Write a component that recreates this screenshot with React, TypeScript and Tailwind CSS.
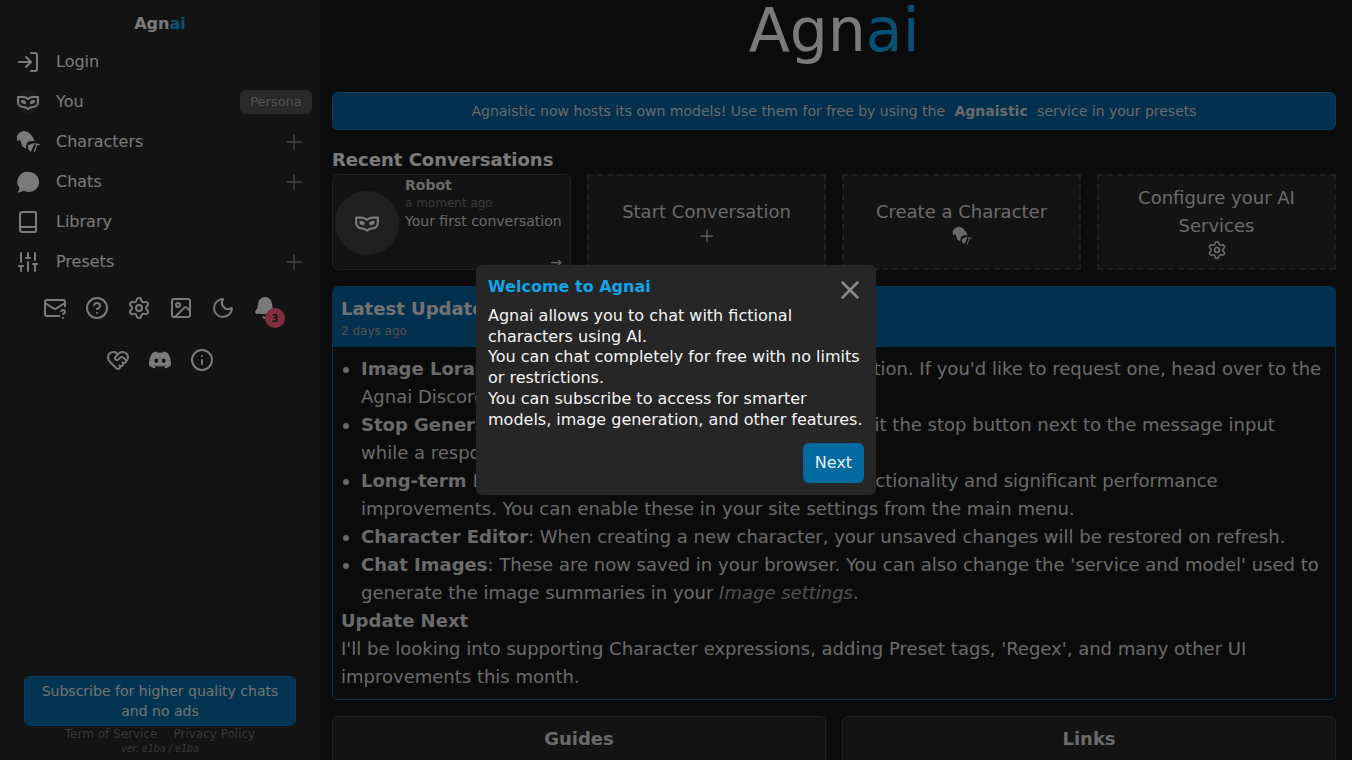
import { Bell, Book, CircleHelp, HeartHandshake, Image, Info, LogIn, MailQuestion, Moon, Plus, Settings, SlidersHorizontal, X } from "lucide-react";
import { FaDiscord } from "react-icons/fa";
import type { ReactNode } from "react";

// silhouette used for the Characters menu entry
const WizardIcon = ({ size = 24 }: { size?: number }) => (
  <svg width={size} height={size} viewBox="0 0 24 24" fill="currentColor">
    <path d="M.7 6.300 3 3 8 .7l5 2 3.300 3.600 2.400 4.400-5.700.6-2.300 2.200-1 5.200-3.400-2.400L4 9.700l-2.700 1.600z" />
    <path d="M12 15.300l7-2.600L14.700 22 12 18.700z" />
    <path d="M18.200 22 21 14M19 13.800l4.700.9" fill="none" stroke="currentColor" strokeWidth="1.200" />
  </svg>
);

const ChatIcon = () => (
  <svg width="24" height="24" viewBox="0 0 24 24" fill="currentColor">
    <path d="M13 2a10 10 0 1 1-5.200 18.500C6 22 3.500 22.600 1.200 22.400c1.400-1.300 2-2.600 2.300-4.400A10 10 0 0 1 13 2z" />
  </svg>
);

const MaskIcon = ({ size = 24 }: { size?: number }) => (
  <svg width={size} height={size} viewBox="0 0 24 24" fill="none" stroke="currentColor" strokeWidth="2" strokeLinecap="round" strokeLinejoin="round">
    <path d="M2 12a5 5 0 0 0 5 5 8 8 0 0 1 5 2 8 8 0 0 1 5-2 5 5 0 0 0 5-5V7h-5a8 8 0 0 0-5 2 8 8 0 0 0-5-2H2Z" />
    <path d="M6 11c1.500 0 3 .5 3 2-2 0-3 0-3-2Z" />
    <path d="M18 11c-1.500 0-3 .5-3 2 2 0 3 0 3-2Z" />
  </svg>
);

const NavRow = ({ icon, label, right }: { icon: ReactNode; label: string; right?: ReactNode }) => (
  <div className="flex h-10 items-center justify-between pr-2 pl-4">
    <div className="flex items-center gap-4">
      <span className="flex w-6 justify-center">{icon}</span>
      <span>{label}</span>
    </div>
    {right}
  </div>
);

const AddButton = () => (
  <span className="flex w-[36px] justify-center text-[#8a8a8a]">
    <Plus size={24} strokeWidth={1.5} />
  </span>
);

const Sidebar = () => (
  <aside className="flex h-full w-[320px] shrink-0 flex-col bg-[#262626] text-[#f5f5f5]">
    <div className="flex h-[42px] shrink-0 items-center justify-center pt-[6px] text-[16px] font-bold">
      <span className="text-[#f5f5f5]">Agn</span>
      <span className="text-[#0ea5e9]">ai</span>
    </div>
    <NavRow icon={<LogIn size={24} />} label="Login" />
    <NavRow
      icon={
        <span className="flex h-6 w-6 items-center justify-center rounded-full bg-[#333333]">
          <MaskIcon size={24} />
        </span>
      }
      label="You"
      right={<span className="flex h-6 w-[72px] items-center justify-center rounded-md bg-[#525252] text-[13px] text-[#a3a3a3]">Persona</span>}
    />
    <NavRow icon={<WizardIcon />} label="Characters" right={<AddButton />} />
    <NavRow icon={<ChatIcon />} label="Chats" right={<AddButton />} />
    <NavRow icon={<Book size={24} />} label="Library" />
    <NavRow icon={<SlidersHorizontal size={24} className="rotate-90" />} label="Presets" right={<AddButton />} />
    <div className="flex h-[52px] items-center justify-center gap-[18px]">
      <MailQuestion size={24} />
      <CircleHelp size={24} />
      <Settings size={24} />
      <Image size={24} />
      <Moon size={24} />
      <span className="relative">
        <Bell size={24} fill="currentColor" />
        <span className="absolute top-[12px] left-[12px] flex h-5 w-5 items-center justify-center rounded-full bg-[#ff5c80] text-[10px] font-bold text-[#262626]">3</span>
      </span>
    </div>
    <div className="flex h-[52px] items-center justify-center gap-[18px]">
      <HeartHandshake size={24} />
      <FaDiscord size={24} />
      <Info size={24} />
    </div>
    <div className="mt-auto flex flex-col items-center pb-[4px]">
      <div className="w-[272px] rounded-md border border-[#0a7ec0] bg-[#0369a1] px-2 py-[4px] text-center text-[14px] leading-[20px] text-[#e5e5e5]">
        Subscribe for higher quality chats and no ads
      </div>
      <div className="flex gap-4 text-[12px] leading-[16px] text-[#737373]">
        <span>Term of Service</span>
        <span>Privacy Policy</span>
      </div>
      <div className="text-[9.6px] leading-[14px] text-[#737373] italic">ver. e1ba / e1ba</div>
    </div>
  </aside>
);

const DashedCard = ({ children }: { children: ReactNode }) => (
  <div className="flex flex-col items-center justify-center border-2 border-dashed border-[#404040] bg-[#262626] text-center text-[18px] leading-[28px] text-[#d4d4d4]">
    {children}
  </div>
);

const Main = () => (
  <main className="flex min-w-0 flex-1 flex-col overflow-hidden bg-[#171717] pr-4 pl-3 text-[#f5f5f5]">
    <div className="flex h-[60px] shrink-0 items-center justify-center text-[60px] leading-[60px]">
      <span className="text-[#f5f5f5]">Agn</span>
      <span className="text-[#0ea5e9]">ai</span>
    </div>
    <div className="mt-[32px] flex h-[38px] shrink-0 items-center justify-center rounded-md border border-[#0a7ec0] bg-[#07609a] text-[14px] text-[#d4d4d4]">
      <span className="whitespace-pre">Agnaistic now hosts its own models! Use them for free by using the </span>
      <b className="mx-[5px]">Agnaistic</b>
      <span className="whitespace-pre"> service in your presets</span>
    </div>
    <h2 className="mt-[18px] text-[18px] leading-[24px] font-bold text-[#f5f5f5]">Recent Conversations</h2>
    <div className="mt-[2px] grid h-[96px] shrink-0 grid-cols-4 gap-4">
      <div className="flex rounded-md border border-[#404040] bg-[#262626]">
        <div className="mt-[16px] ml-[2px] flex h-16 w-16 shrink-0 items-center justify-center self-start rounded-full bg-[#404040]">
          <MaskIcon size={26} />
        </div>
        <div className="relative flex-1 pl-[6px] text-[14px]">
          <div className="text-[14px] leading-[20px] font-bold text-[#d4d4d4]">Robot</div>
          <div className="text-[12px] leading-[16px] text-[#737373]">a moment ago</div>
          <div className="leading-[20px] text-[#d4d4d4]">Your first conversation</div>
          <span className="absolute right-[8px] bottom-[-4px] text-[14px] text-[#d4d4d4]">→</span>
        </div>
      </div>
      <DashedCard>
        <span>Start Conversation</span>
        <Plus size={20} strokeWidth={1.5} />
      </DashedCard>
      <DashedCard>
        <span>Create a Character</span>
        <WizardIcon size={20} />
      </DashedCard>
      <DashedCard>
        <span>Configure your AI Services</span>
        <Settings size={20} />
      </DashedCard>
    </div>
    <section className="mt-4 shrink-0 overflow-hidden rounded-md border border-[#0369a1]">
      <header className="flex h-[60px] flex-col justify-center bg-[#07609a] px-2">
        <div className="text-[18px] leading-[28px] font-bold text-[#e5e5e5]">Latest Updates</div>
        <div className="text-[12px] leading-[16px] text-[#a3a3a3]">2 days ago</div>
      </header>
      <div className="px-2 py-[8px] text-[18px] leading-[28px] text-[#d4d4d4]">
        <ul className="list-disc pl-[20px]">
          <li>
            <b>Image Loras</b>: Loras <span className="ml-[1.5px]">are</span> now available for image generation. If you'd like to request one, head over to the Agnai Discord.
          </li>
          <li>
            <b>Stop Generation</b>: You <span className="-ml-[3px]">can</span> stop messages generating. Hit the stop button next to the message input while a response is being generated.
          </li>
          <li>
            <b>Long-term Memory</b>: Embeddings <span className="-ml-[2px]">now</span> have greater functionality and significant performance improvements. You can enable these in your site settings from the main menu.
          </li>
          <li>
            <b>Character Editor</b>: When creating a new character, your unsaved changes will be restored on refresh.
          </li>
          <li>
            <b>Chat Images</b>: These are now saved in your browser. You can also change the 'service and model' used to generate the image summaries in your <i className="text-[#a3a3a3]">Image settings</i>.
          </li>
        </ul>
        <div className="font-bold">Update Next</div>
        <p>I'll be looking into supporting Character expressions, adding Preset tags, 'Regex', and many other UI improvements this month.</p>
      </div>
    </section>
    <div className="mt-4 grid shrink-0 grid-cols-2 gap-4">
      <div className="h-[60px] rounded-md border border-[#404040] bg-[#262626] pt-[8px] text-center text-[18px] leading-[28px] font-bold text-[#d4d4d4]">Guides</div>
      <div className="h-[60px] rounded-md border border-[#404040] bg-[#262626] pt-[8px] text-center text-[18px] leading-[28px] font-bold text-[#d4d4d4]">Links</div>
    </div>
  </main>
);

// modal sits over a dimmed page
const WelcomeModal = () => (
  <div className="fixed inset-0 z-10 flex items-center justify-center bg-black/50">
    <div className="w-[400px] rounded-md bg-[#262626] p-3 text-[#f5f5f5]">
      <div className="flex h-[24px] items-start justify-between">
        <div className="-mt-[2px] text-[16px] leading-[24px] font-bold text-[#0ea5e9]">Welcome to Agnai</div>
        <X size={30} className="mt-[-2px] mr-[-1px] text-[#8a8a8a]" />
      </div>
      <div className="mt-[5.2px] text-[16px] leading-[20.8px]">
        Agnai allows you to chat with fictional characters using AI.
        <br />
        You can chat completely for free with no limits or restrictions.
        <br />
        You can subscribe to access for smarter models, image generation, and other features.
      </div>
      <div className="mt-[12.8px] flex justify-end">
        <span className="flex h-10 w-[61px] items-center justify-center rounded-md bg-[#0369a1] text-[#e0f2fe]">Next</span>
      </div>
    </div>
  </div>
);

export default function App() {
  return (
    <div className="flex h-screen overflow-hidden font-['DejaVu_Sans',sans-serif] text-[16px]">
      <Sidebar />
      <Main />
      <WelcomeModal />
    </div>
  );
}
